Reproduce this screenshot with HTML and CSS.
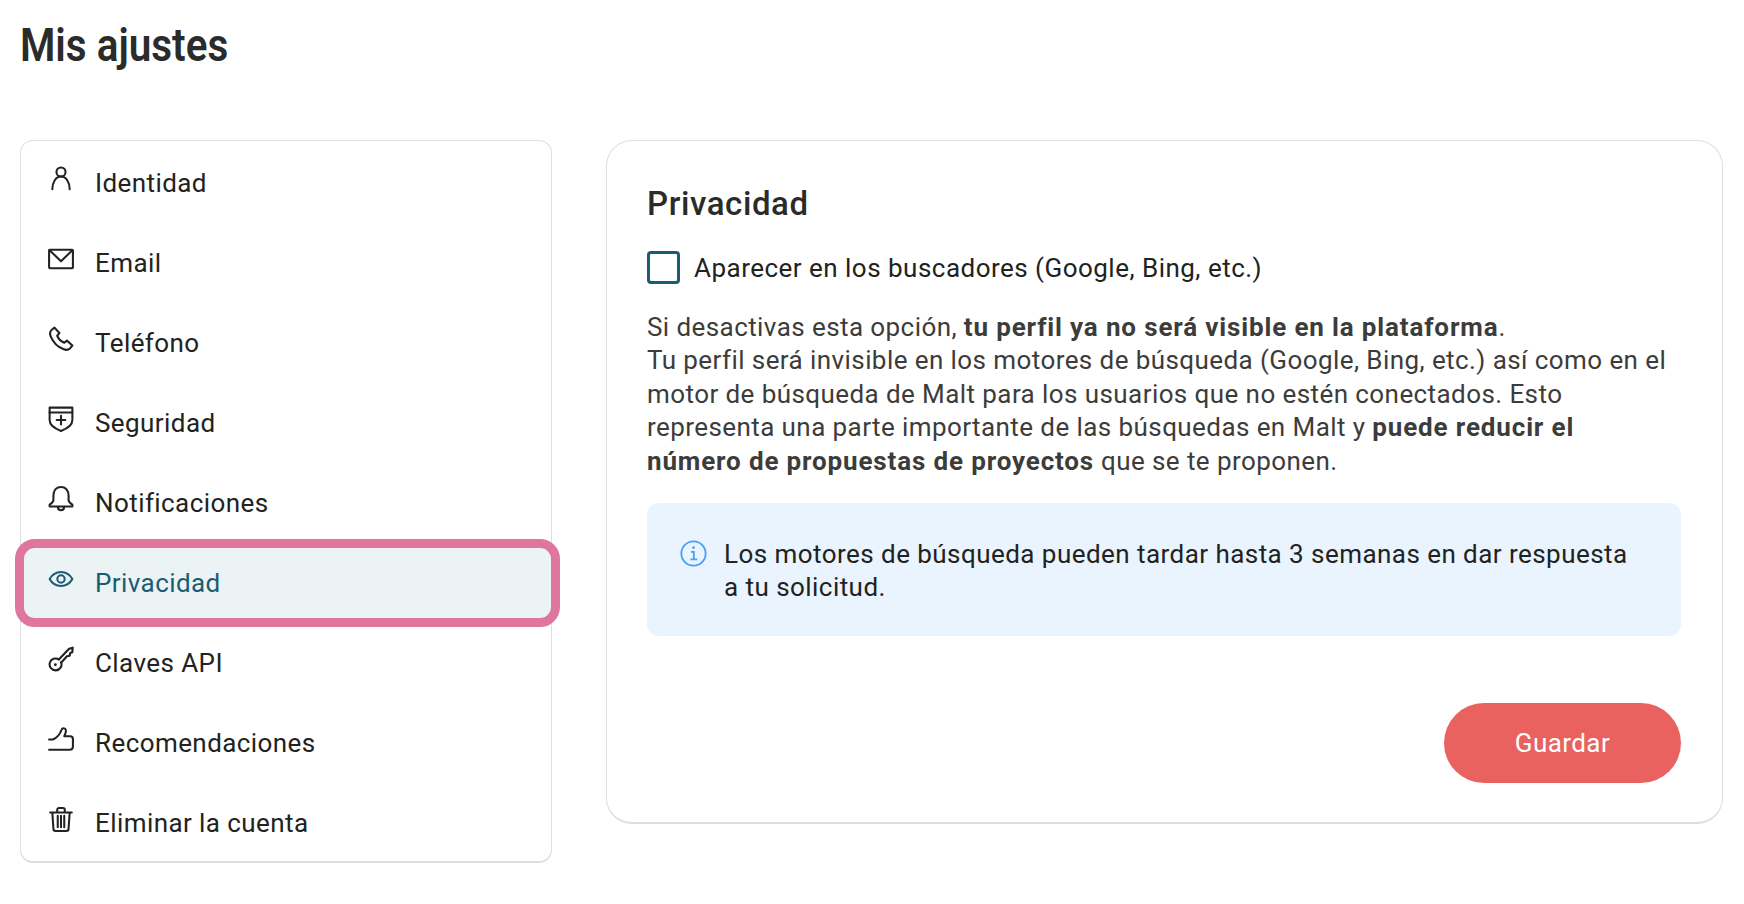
FILE: index.html
```html
<!DOCTYPE html>
<html lang="es">
    <head>
        <meta charset="UTF-8">
        <title>Mis ajustes</title>
        <link rel="stylesheet" href="styles.css">
    </head>
    <body>
        <h1 class="page-title">Mis ajustes</h1>

        <div class="settings">
            <nav class="side-menu">
                <a class="menu-item">
                    <svg class="menu-icon" viewBox="0 0 24 24"><circle cx="12" cy="5.500" r="4.200"/><path d="M4 21.500c0-6.500 3.300-11.800 8-11.800s8 5.300 8 11.800"/></svg>
                    <span>Identidad</span>
                </a>
                <a class="menu-item">
                    <svg class="menu-icon" viewBox="0 0 24 24"><rect x="1" y="3.500" width="22" height="17" rx="0.8"/><path d="M1.500 4l10.500 10L22.500 4"/></svg>
                    <span>Email</span>
                </a>
                <a class="menu-item">
                    <svg class="menu-icon" viewBox="0 0 24 24"><path d="M6 1.500L3.500 3.500C1.500 5 1.500 7 2.500 9.500c2 5 7 10 12 12 2.500 1 4.500 .5 6-1l2-2.500-5-4.500-2.500 2c-2.500-1-5.500-4-6.500-6.500l2-2.500z"/></svg>
                    <span>Teléfono</span>
                </a>
                <a class="menu-item">
                    <svg class="menu-icon" viewBox="0 0 24 24"><path d="M1.500 1.500h21V13c0 4.500-5 8-10.500 10C6.500 21 1.500 17.500 1.500 13z"/><path d="M1.500 6h21M12 9v8M8 13h8"/></svg>
                    <span>Seguridad</span>
                </a>
                <a class="menu-item">
                    <svg class="menu-icon" viewBox="0 0 24 24"><path d="M12 1C7.200 1 5 4.800 5 9v4c0 2-1.500 3-3.500 4.200V19h21v-1.800c-2-1.200-3.500-2.200-3.500-4.200V9c0-4.200-2.200-8-7-8z"/><path d="M9.200 19.500a2.800 2.800 0 0 0 5.600 0"/></svg>
                    <span>Notificaciones</span>
                </a>
                <a class="menu-item active">
                    <svg class="menu-icon" viewBox="0 0 24 24"><path d="M1.500 12C4 7.500 8 5.500 12 5.500s8 2 10.500 6.500c-2.500 4.500-6.500 6.500-10.500 6.500S4 16.500 1.500 12z"/><circle cx="12" cy="12" r="3.400"/></svg>
                    <span>Privacidad</span>
                </a>
                <a class="menu-item">
                    <svg class="menu-icon" viewBox="0 0 24 24"><path d="M10 12.400L19.500 2.500l3.300-1-.3 4.200-2 .8-.5 2.500-2.500.5-5.400 6"/><path d="M10 12.400A5.500 5.500 0 1 0 12.100 15"/><circle class="solid" cx="6.800" cy="17.300" r="1.300"/></svg>
                    <span>Claves API</span>
                </a>
                <a class="menu-item">
                    <svg class="menu-icon" viewBox="0 0 24 24"><path d="M1 12.500h3.500c3.500-1.500 6.500-4.500 8-9 .6-2 3.500-2 4 .2.500 2.300-1 4-1.500 5.800h5.500c1.500 0 2.500 1 2.500 2.500V19c0 2-1 3-3 3H1"/></svg>
                    <span>Recomendaciones</span>
                </a>
                <a class="menu-item">
                    <svg class="menu-icon" viewBox="0 0 24 24"><path d="M2 6h20M8.500 6V3.500c0-1 .8-1.700 1.700-1.700h3.600c.9 0 1.700.7 1.700 1.700V6M4 6l1 15c0 1.200 1 2 2 2h10c1 0 2-.8 2-2l1-15M9 9v10.500M12 9v10.500M15 9v10.500"/></svg>
                    <span>Eliminar la cuenta</span>
                </a>
            </nav>

            <section class="panel">
                <h2 class="panel-title">Privacidad</h2>

                <label class="check-row">
                    <span class="check-box"></span>
                    <span class="check-label">Aparecer en los buscadores (Google, Bing, etc.)</span>
                </label>

                <p class="panel-text">
                    Si desactivas esta opción, <b>tu perfil ya no será visible en la plataforma</b>.<br>
                    Tu perfil será invisible en los motores de búsqueda (Google, Bing, etc.) así como en el<br>
                    motor de búsqueda de Malt para los usuarios que no estén conectados. Esto<br>
                    representa una parte importante de las búsquedas en Malt y <b>puede reducir el<br>
                    número de propuestas de proyectos</b> que se te proponen.
                </p>

                <div class="notice">
                    <svg class="notice-icon" viewBox="0 0 24 24"><circle cx="12" cy="12" r="10.800"/><path d="M9.800 10.500H12.300V17M9.300 17.300h6"/><circle class="solid" cx="12" cy="6.800" r="1.200"/></svg>
                    <p>Los motores de búsqueda pueden tardar hasta 3 semanas en dar respuesta<br>a tu solicitud.</p>
                </div>

                <div class="panel-actions">
                    <button class="save-btn">Guardar</button>
                </div>
            </section>
        </div>
    </body>
</html>
```

FILE: styles.css
```css
body {
    margin: 0;
    padding: 0 21px 0 20px;
    background: #fff;
    color: #222220;
    font-family: Roboto, "Liberation Sans", sans-serif;
    font-size: 26px;
    letter-spacing: 0.42px;
}

.page-title {
    margin: 0;
    height: 140px;
    padding-top: 18px;
    box-sizing: border-box;
    font-size: 47px;
    line-height: 54px;
    font-weight: 600;
    letter-spacing: 0;
    color: #2b2b29;
    transform: scaleX(0.86);
    transform-origin: left top;
}

.settings {
    display: flex;
    align-items: flex-start;
    gap: 54px;
}

/* left menu */
.side-menu {
    width: 532px;
    flex: none;
    box-sizing: border-box;
    border: 1px solid #dfded9;
    border-bottom-width: 2px;
    border-radius: 13px;
}

.menu-item {
    display: flex;
    align-items: center;
    height: 80px;
    padding-left: 27px;
    box-sizing: border-box;
}

.menu-item span {
    margin: 4px 0 0 21px;
}

.menu-icon {
    width: 26px;
    height: 26px;
    flex: none;
    margin-bottom: 4px;
    fill: none;
    stroke: currentColor;
    stroke-width: 1.9;
    stroke-linejoin: round;
    stroke-linecap: round;
}

.solid {
    fill: currentColor;
    stroke: none;
}

.menu-item.active {
    height: 70px;
    margin: 7px 0 3px 3px;
    padding-left: 24px;
    background: #ebf3f5;
    color: #1c5c73;
    border-radius: 11px;
    outline: 9px solid #df769c;
}

.menu-item.active span {
    margin-top: 0;
}

.menu-item.active .menu-icon {
    margin-bottom: 8px;
}

/* right panel */
.panel {
    flex: 1;
    height: 684px;
    box-sizing: border-box;
    padding: 43px 41px 40px 40px;
    border: 1px solid #dfded9;
    border-bottom-width: 2px;
    border-radius: 26px;
}

.panel-title {
    margin: 0;
    font-size: 33px;
    line-height: 40px;
    font-weight: 500;
    letter-spacing: 0.6px;
    color: #2b2b29;
}

.check-row {
    display: flex;
    align-items: center;
    gap: 14px;
    margin-top: 27px;
}

.check-box {
    width: 33px;
    height: 33px;
    box-sizing: border-box;
    border: 3px solid #1c5c73;
    border-radius: 4px;
}

.check-label {
    letter-spacing: 0.48px;
}

.panel-text {
    margin: 27px 0 0;
    line-height: 33.400px;
    color: #3c3c3a;
}

.panel-text b {
    letter-spacing: 0.85px;
}

.notice {
    display: flex;
    gap: 17px;
    height: 133px;
    box-sizing: border-box;
    margin-top: 25px;
    padding: 35px 33px;
    background: #e9f4fe;
    border-radius: 12px;
}

.notice p {
    margin: 0;
    line-height: 33.400px;
    letter-spacing: 0.45px;
}

.notice-icon {
    width: 27px;
    height: 27px;
    flex: none;
    margin-top: 2px;
    fill: none;
    stroke: #4a9df8;
    stroke-width: 1.600;
    color: #4a9df8;
}

.panel-actions {
    display: flex;
    justify-content: flex-end;
    margin-top: 67px;
}

.save-btn {
    width: 237px;
    height: 80px;
    border: 0;
    border-radius: 40px;
    background: #e9625f;
    color: #fff;
    font-family: inherit;
    font-size: 26px;
    letter-spacing: inherit;
}
```
